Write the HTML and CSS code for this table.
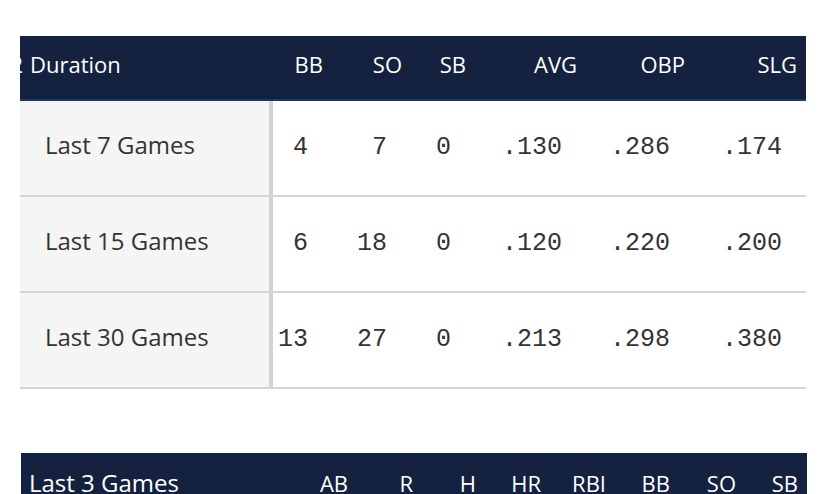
FILE: index.html
```html
<!DOCTYPE html>
<html lang="en">
<head>
<meta charset="utf-8">
<title>Splits</title>
<link rel="stylesheet" href="styles.css">
</head>
<body>
<main class="page">
  <section class="stat-table splits">
    <div class="row head">
      <div class="cell label"><span class="clip">2</span>Duration</div>
      <div class="cell">BB</div>
      <div class="cell">SO</div>
      <div class="cell">SB</div>
      <div class="cell">AVG</div>
      <div class="cell">OBP</div>
      <div class="cell">SLG</div>
    </div>
    <div class="row body">
      <div class="cell label">Last 7 Games</div>
      <div class="cell num">4</div>
      <div class="cell num">7</div>
      <div class="cell num">0</div>
      <div class="cell num">.130</div>
      <div class="cell num">.286</div>
      <div class="cell num">.174</div>
    </div>
    <div class="row body">
      <div class="cell label">Last 15 Games</div>
      <div class="cell num">6</div>
      <div class="cell num">18</div>
      <div class="cell num">0</div>
      <div class="cell num">.120</div>
      <div class="cell num">.220</div>
      <div class="cell num">.200</div>
    </div>
    <div class="row body">
      <div class="cell label">Last 30 Games</div>
      <div class="cell num">13</div>
      <div class="cell num">27</div>
      <div class="cell num">0</div>
      <div class="cell num">.213</div>
      <div class="cell num">.298</div>
      <div class="cell num">.380</div>
    </div>
  </section>

  <section class="stat-table games">
    <div class="row head">
      <div class="cell label">Last 3 Games</div>
      <div class="cell">AB</div>
      <div class="cell">R</div>
      <div class="cell">H</div>
      <div class="cell">HR</div>
      <div class="cell">RBI</div>
      <div class="cell">BB</div>
      <div class="cell">SO</div>
      <div class="cell">SB</div>
    </div>
  </section>
</main>
</body>
</html>
```

FILE: styles.css
```css
html, body {
  margin: 0;
  padding: 0;
  background: #ffffff;
  overflow: hidden;
}

.page {
  display: flex;
  flex-direction: column;
  gap: 64px;
  padding: 36px 22px 0 20px;
  font-family: "Open Sans", "Lato", sans-serif;
}

.stat-table {
  width: 786px;
  overflow: hidden;
}

.row {
  display: grid;
  box-sizing: border-box;
}

.splits .row {
  grid-template-columns: 253px 59px 79px 64px 111px 108px 112px;
}

.games {
  margin-left: 1px;
}

.games .row {
  grid-template-columns: 280px 56px 65px 63px 65px 65px 64px 66px 62px;
}

.cell {
  box-sizing: border-box;
  white-space: nowrap;
}

/* header */
.head {
  height: 65px;
  padding-top: 15px;
  background: #142240;
  border-bottom: 2px solid #1b3570;
  color: #ffffff;
  font-size: 22px;
  line-height: 26px;
  align-items: start;
}

.head .cell {
  text-align: right;
  padding-right: 9px;
}

.head .label {
  text-align: left;
  padding-left: 10px;
}

.games .head {
  padding-top: 17px;
  align-items: baseline;
}

.games .head .label {
  padding-left: 8px;
  font-size: 24px;
}

.clip {
  display: inline-block;
  width: 3px;
  margin-left: -10px;
  margin-right: 7px;
  overflow: hidden;
  direction: rtl;
  vertical-align: bottom;
}

/* body rows */
.body {
  height: 96px;
  border-bottom: 2px solid #d5d5d5;
  align-items: baseline;
}

.body .label {
  height: 94px;
  padding: 29px 0 0 25px;
  background: #f5f5f5;
  border-right: 4px solid #d3d3d3;
  color: #333333;
  font-size: 24px;
  line-height: 30px;
}

.body .num {
  text-align: right;
  padding-right: 24px;
  color: #333333;
  font-family: "Liberation Mono", "Courier New", monospace;
  font-size: 25px;
  line-height: 30px;
}
```
